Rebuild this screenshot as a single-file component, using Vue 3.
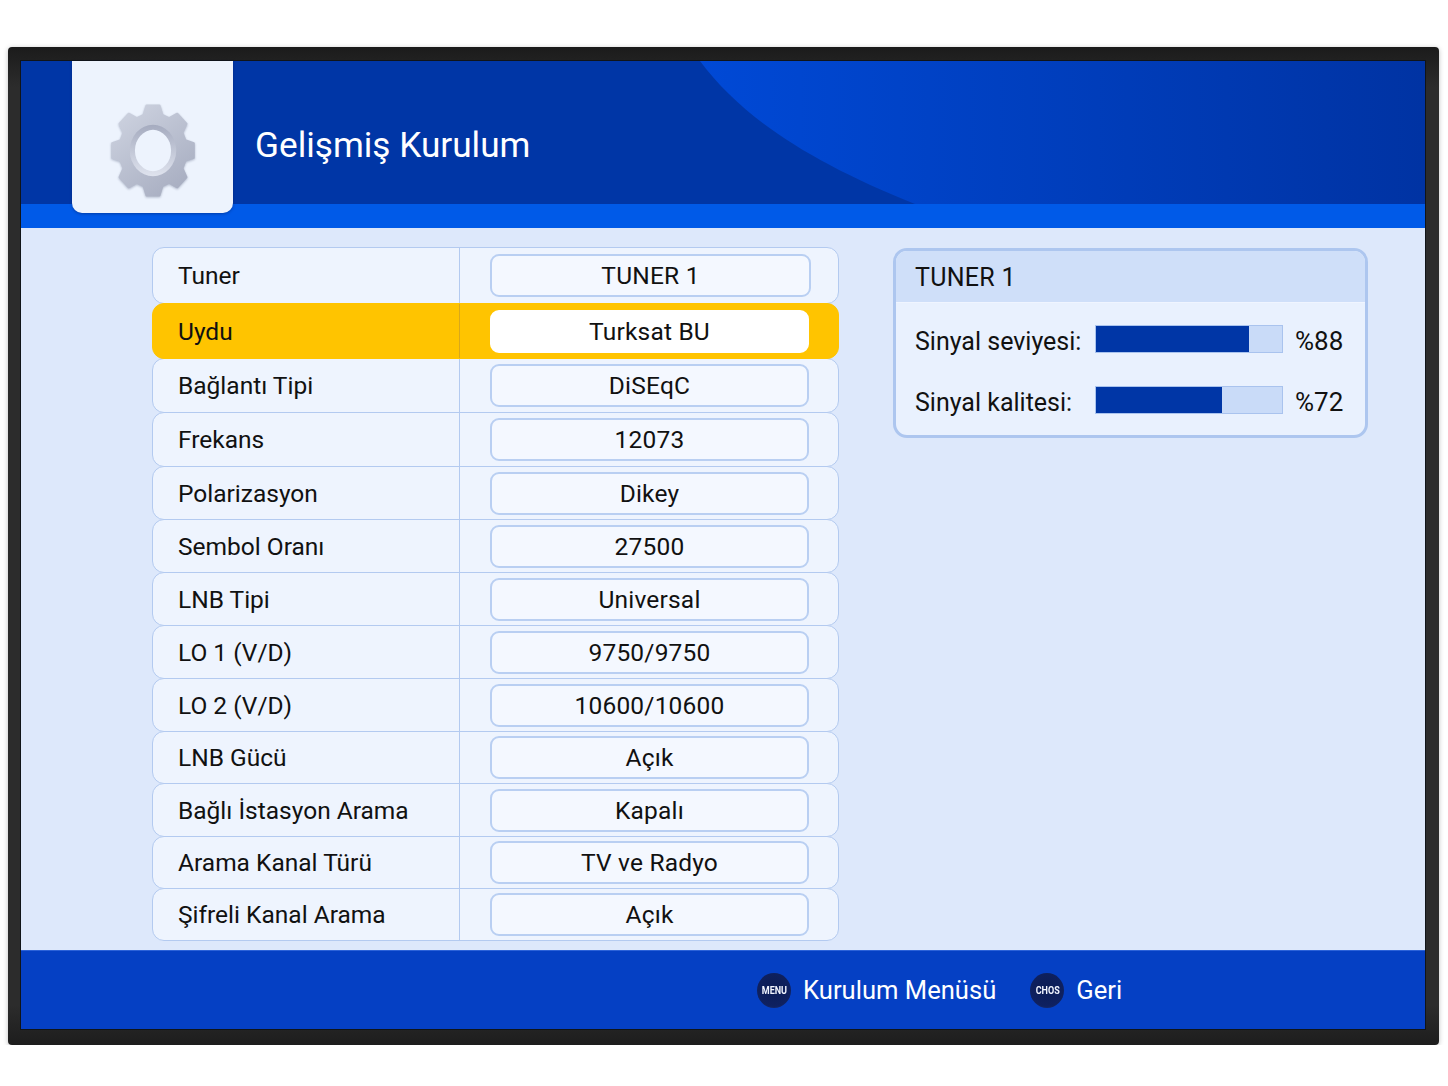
<template>
  <div class="tv">
    <div class="screen">
      <header class="top">
        <svg class="top-curve" viewBox="0 0 1404 143" preserveAspectRatio="none" aria-hidden="true">
          <defs>
            <linearGradient id="curveFill" x1="0" y1="0" x2="1" y2="0">
              <stop offset="0" stop-color="#0049d6" />
              <stop offset="1" stop-color="#0033a3" />
            </linearGradient>
          </defs>
          <path d="M679 0 C722 58 792 102 894 143 L1404 143 L1404 0 Z" fill="url(#curveFill)" />
        </svg>
        <div class="logo-tile">
          <svg class="gear" viewBox="0 0 100 110" aria-hidden="true">
            <defs>
              <linearGradient id="gearFill" x1="0" y1="0" x2="0.7" y2="1">
                <stop offset="0" stop-color="#d0d5e2" />
                <stop offset="1" stop-color="#a9afc2" />
              </linearGradient>
              <linearGradient id="ringFill" x1="0" y1="0" x2="0" y2="1">
                <stop offset="0" stop-color="#a5abbf" />
                <stop offset="1" stop-color="#dfe3ee" />
              </linearGradient>
            </defs>
            <path :d="gearPath" fill="url(#gearFill)" stroke="url(#gearFill)" stroke-width="2.5" stroke-linejoin="round" />
            <ellipse cx="50" cy="55" rx="27" ry="30" fill="url(#ringFill)" />
            <ellipse cx="50" cy="55" rx="21" ry="24" fill="#edf3fd" />
          </svg>
        </div>
        <h1 class="title">Gelişmiş Kurulum</h1>
      </header>

      <main class="content">
        <div class="settings">
          <div
            v-for="row in rows"
            :key="row.label"
            class="row"
            :class="{ active: row.active }"
          >
            <div class="row-label">{{ row.label }}</div>
            <div class="row-value">
              <div class="pill">{{ row.value }}</div>
            </div>
          </div>
        </div>

        <section class="signal">
          <h2 class="signal-head">TUNER 1</h2>
          <div class="signal-body">
            <div v-for="s in signals" :key="s.label" class="signal-row">
              <span class="signal-label">{{ s.label }}</span>
              <div class="bar">
                <div class="bar-fill" :style="{ width: s.fill + '%' }"></div>
              </div>
              <span class="signal-value">%{{ s.value }}</span>
            </div>
          </div>
        </section>
      </main>

      <footer class="bottom">
        <div class="hint">
          <span class="key"><span class="key-text">MENU</span></span>
          <span>Kurulum Menüsü</span>
        </div>
        <div class="hint">
          <span class="key"><span class="key-text">CHOS</span></span>
          <span>Geri</span>
        </div>
      </footer>
    </div>
  </div>
</template>

<script setup>
const rows = [
  { label: 'Tuner', value: 'TUNER 1' },
  { label: 'Uydu', value: 'Turksat BU', active: true },
  { label: 'Bağlantı Tipi', value: 'DiSEqC' },
  { label: 'Frekans', value: '12073' },
  { label: 'Polarizasyon', value: 'Dikey' },
  { label: 'Sembol Oranı', value: '27500' },
  { label: 'LNB Tipi', value: 'Universal' },
  { label: 'LO 1 (V/D)', value: '9750/9750' },
  { label: 'LO 2 (V/D)', value: '10600/10600' },
  { label: 'LNB Gücü', value: 'Açık' },
  { label: 'Bağlı İstasyon Arama', value: 'Kapalı' },
  { label: 'Arama Kanal Türü', value: 'TV ve Radyo' },
  { label: 'Şifreli Kanal Arama', value: 'Açık' }
]

const signals = [
  { label: 'Sinyal seviyesi:', value: 88, fill: 82 },
  { label: 'Sinyal kalitesi:', value: 72, fill: 68 }
]

// 8 tooth gear, one tooth pointing straight up
function makeGear() {
  const cx = 50, cy = 55, sx = 1, sy = 1.1
  const teeth = 8
  const pts = []
  for (let i = 0; i < teeth; i++) {
    const a = (i / teeth) * Math.PI * 2 - Math.PI / 2
    const step = Math.PI * 2 / teeth
    const add = (r, off) => {
      pts.push([cx + Math.cos(a + off * step) * r * sx, cy + Math.sin(a + off * step) * r * sy])
    }
    add(39, -0.36)
    add(48, -0.2)
    add(48, 0.2)
    add(39, 0.36)
  }
  return 'M' + pts.map(p => p[0].toFixed(1) + ' ' + p[1].toFixed(1)).join(' L') + ' Z'
}
const gearPath = makeGear()
</script>

<style>
html, body { background: #fff; }
</style>

<style scoped>
.tv {
  box-sizing: border-box;
  width: 1431px;
  height: 998px;
  margin: 47px 0 0 8px;
  padding: 14px 14px 16px 13px;
  background: linear-gradient(#1b1b1b, #2c2c2c 4%, #2c2c2c 96%, #1d1d1d);
  border-radius: 4px;
  box-shadow: 0 1px 5px rgba(0, 0, 0, 0.25);
  font-family: "Roboto", sans-serif;
}

.screen {
  display: flex;
  flex-direction: column;
  height: 100%;
  background: #dde8fb;
  box-shadow: 0 0 0 1px #101418;
}

.top {
  position: relative;
  flex: none;
  display: flex;
  height: 167px;
  background: linear-gradient(#0036a6, #0036a6) top / 100% 143px no-repeat, #005ae8;
}

.top-curve {
  position: absolute;
  left: 0;
  top: 0;
  width: 100%;
  height: 143px;
}

.logo-tile {
  position: relative;
  flex: none;
  display: flex;
  align-items: center;
  justify-content: center;
  box-sizing: border-box;
  width: 161px;
  height: 152px;
  margin-left: 51px;
  padding-top: 27px;
  background: #edf3fd;
  border-radius: 0 0 10px 10px;
  box-shadow: 0 1px 3px rgba(0, 20, 80, 0.4);
}

.gear {
  width: 86px;
  height: 95px;
  filter: drop-shadow(0 1px 1px rgba(90, 100, 130, 0.4));
}

.title {
  position: relative;
  margin: 62px 0 0 22px;
  height: 44px;
  font-size: 35.2px;
  line-height: 44px;
  font-weight: 400;
  color: #fff;
}

.content {
  flex: 1;
  display: flex;
  align-items: flex-start;
  gap: 54px;
  padding: 19px 0 0 131px;
  min-height: 0;
}

.settings {
  flex: none;
  display: grid;
  width: 687px;
  grid-template-rows: 56px 55px 54px 54px 53px 53px 53px 53px 53px 52px 53px 52px 52px;
}

.row {
  box-sizing: border-box;
  display: grid;
  grid-template-columns: 307px 1fr;
  background: #eef4fe;
  border: 1px solid #b3caf0;
  border-radius: 12px;
  margin-bottom: -1px;
  font-size: 24.5px;
  color: #111;
}

.row-label {
  display: flex;
  align-items: center;
  padding-left: 25px;
  border-right: 1px solid #b3caf0;
}

.row-value {
  display: flex;
  align-items: center;
  padding-left: 30px;
}

.pill {
  box-sizing: border-box;
  width: 319px;
  height: 43px;
  line-height: 40px;
  letter-spacing: 0.2px;
  text-align: center;
  background: #f4f8ff;
  border: 2px solid #b9cff2;
  border-radius: 9px;
}

.row:first-child .pill { width: 321px; }

.row.active {
  background: #ffc400;
  border-color: #ffc400;
  position: relative;
}
.row.active .row-label { border-right-color: #d9a81a; }
.row.active .pill {
  background: #fff;
  border-color: #fff;
}

.signal {
  flex: none;
  box-sizing: border-box;
  width: 475px;
  height: 190px;
  margin-top: 1px;
  background: #e9f1fe;
  border: 3px solid #adc6ef;
  border-radius: 14px;
  overflow: hidden;
  color: #111;
}

.signal-head {
  margin: 0;
  height: 51px;
  line-height: 54px;
  padding-left: 19px;
  font-size: 25px;
  font-weight: 400;
  letter-spacing: 0.3px;
  background: #cfdff9;
  border-bottom: 1px solid #f0f5ff;
}

.signal-body {
  display: flex;
  flex-direction: column;
  gap: 33px;
  padding: 22px 0 0 19px;
}

.signal-row {
  display: flex;
  align-items: center;
  height: 28px;
  font-size: 25px;
}

.signal-label { width: 180px; flex: none; padding-top: 4px; }

.bar {
  box-sizing: border-box;
  flex: none;
  width: 188px;
  height: 28px;
  background: #c9dbf8;
  border: 1px solid #a9c3ee;
}

.bar-fill {
  height: 100%;
  background: #0036a6;
}

.signal-value { margin-left: 12px; padding-top: 4px; font-size: 26px; }

.bottom {
  flex: none;
  display: flex;
  align-items: center;
  gap: 34px;
  box-sizing: border-box;
  height: 79px;
  padding: 0 0 0 736px;
  background: #0540c4;
  border-top: 1px solid #2c62d8;
  color: #fff;
  font-size: 25.6px;
}

.hint {
  display: flex;
  align-items: center;
  gap: 12px;
}

.key {
  display: flex;
  align-items: center;
  justify-content: center;
  width: 34px;
  height: 35px;
  border-radius: 50%;
  background: radial-gradient(circle at 50% 42%, #0b1c55, #0f2160 70%, #2a3d7c);
}

.key-text {
  font-size: 11px;
  font-weight: 700;
  color: #f2f5ff;
  transform: scaleX(0.82);
}
</style>
